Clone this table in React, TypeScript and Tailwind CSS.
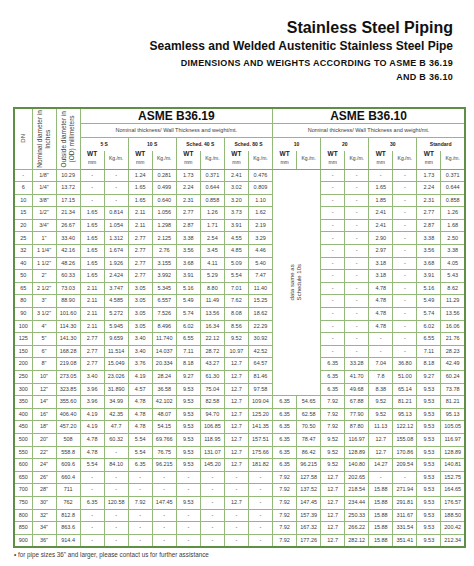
import React from "react";

const b19 = ["5 S", "10 S", "Sched. 40 S", "Sched. 80 S"];
const b10 = ["10", "20", "30", "Standard"];

// rows up to 300 leave out the "10" pair of ASME B36.10 (merged cell)
const rows: string[][] = [
  ["-", '1/8"', "10.29", "-", "-", "1.24", "0.281", "1.73", "0.371", "2.41", "0.476", "-", "-", "-", "-", "1.73", "0.371"],
  ["6", '1/4"', "13.72", "-", "-", "1.65", "0.499", "2.24", "0.644", "3.02", "0.809", "-", "-", "1.65", "-", "2.24", "0.644"],
  ["10", '3/8"', "17.15", "-", "-", "1.65", "0.640", "2.31", "0.858", "3.20", "1.10", "-", "-", "1.85", "-", "2.31", "0.858"],
  ["15", '1/2"', "21.34", "1.65", "0.814", "2.11", "1.056", "2.77", "1.26", "3.73", "1.62", "-", "-", "2.41", "-", "2.77", "1.26"],
  ["20", '3/4"', "26.67", "1.65", "1.054", "2.11", "1.298", "2.87", "1.71", "3.91", "2.19", "-", "-", "2.41", "-", "2.87", "1.68"],
  ["25", '1"', "33.40", "1.65", "1.312", "2.77", "2.125", "3.38", "2.54", "4.55", "3.29", "-", "-", "2.90", "-", "3.38", "2.50"],
  ["32", '1 1/4"', "42.16", "1.65", "1.674", "2.77", "2.76", "3.56", "3.45", "4.85", "4.46", "-", "-", "2.97", "-", "3.56", "3.38"],
  ["40", '1 1/2"', "48.26", "1.65", "1.926", "2.77", "3.155", "3.68", "4.11", "5.09", "5.40", "-", "-", "3.18", "-", "3.68", "4.05"],
  ["50", '2"', "60.33", "1.65", "2.424", "2.77", "3.992", "3.91", "5.29", "5.54", "7.47", "-", "-", "3.18", "-", "3.91", "5.43"],
  ["65", '2 1/2"', "73.03", "2.11", "3.747", "3.05", "5.345", "5.16", "8.80", "7.01", "11.40", "-", "-", "4.78", "-", "5.16", "8.62"],
  ["80", '3"', "88.90", "2.11", "4.585", "3.05", "6.557", "5.49", "11.49", "7.62", "15.25", "-", "-", "4.78", "-", "5.49", "11.29"],
  ["90", '3 1/2"', "101.60", "2.11", "5.272", "3.05", "7.526", "5.74", "13.56", "8.08", "18.62", "-", "-", "4.78", "-", "5.74", "13.56"],
  ["100", '4"', "114.30", "2.11", "5.945", "3.05", "8.496", "6.02", "16.34", "8.56", "22.29", "-", "-", "4.78", "-", "6.02", "16.06"],
  ["125", '5"', "141.30", "2.77", "9.659", "3.40", "11.740", "6.55", "22.12", "9.52", "30.92", "-", "-", "-", "-", "6.55", "21.76"],
  ["150", '6"', "168.28", "2.77", "11.514", "3.40", "14.037", "7.11", "28.72", "10.97", "42.52", "-", "-", "-", "-", "7.11", "28.23"],
  ["200", '8"', "219.08", "2.77", "15.049", "3.76", "20.334", "8.18", "43.27", "12.7", "64.57", "6.35", "33.28", "7.04", "36.80", "8.18", "42.49"],
  ["250", '10"', "273.05", "3.40", "23.026", "4.19", "28.24", "9.27", "61.30", "12.7", "81.46", "6.35", "41.70", "7.8", "51.00", "9.27", "60.24"],
  ["300", '12"', "323.85", "3.96", "31.890", "4.57", "36.58", "9.53", "75.04", "12.7", "97.58", "6.35", "49.68", "8.38", "65.14", "9.53", "73.78"],
  ["350", '14"', "355.60", "3.96", "34.99", "4.78", "42.102", "9.53", "82.58", "12.7", "109.04", "6.35", "54.65", "7.92", "67.88", "9.52", "81.21", "9.53", "81.21"],
  ["400", '16"', "406.40", "4.19", "42.35", "4.78", "48.07", "9.53", "94.70", "12.7", "125.20", "6.35", "62.58", "7.92", "77.90", "9.52", "95.13", "9.53", "95.13"],
  ["450", '18"', "457.20", "4.19", "47.7", "4.78", "54.15", "9.53", "106.85", "12.7", "141.35", "6.35", "70.50", "7.92", "87.80", "11.13", "122.12", "9.53", "105.05"],
  ["500", '20"', "508", "4.78", "60.32", "5.54", "69.766", "9.53", "118.95", "12.7", "157.51", "6.35", "78.47", "9.52", "116.97", "12.7", "155.08", "9.53", "116.97"],
  ["550", '22"', "558.8", "4.78", "-", "5.54", "76.75", "9.53", "131.07", "12.7", "175.66", "6.35", "86.42", "9.52", "128.89", "12.7", "170.86", "9.53", "128.89"],
  ["600", '24"', "609.6", "5.54", "84.10", "6.35", "96.215", "9.53", "145.20", "12.7", "181.82", "6.35", "96.215", "9.52", "140.80", "14.27", "209.54", "9.53", "140.81"],
  ["650", '26"', "660.4", "-", "-", "-", "-", "-", "-", "-", "-", "7.92", "127.58", "12.7", "202.65", "-", "-", "9.53", "152.75"],
  ["700", '28"', "711", "-", "-", "-", "-", "-", "-", "-", "-", "7.92", "137.52", "12.7", "218.54", "15.88", "271.94", "9.53", "164.65"],
  ["750", '30"', "762", "6.35", "120.58", "7.92", "147.45", "9.53", "-", "12.7", "-", "7.92", "147.45", "12.7", "234.44", "15.88", "291.81", "9.53", "176.57"],
  ["800", '32"', "812.8", "-", "-", "-", "-", "-", "-", "-", "-", "7.92", "157.39", "12.7", "250.33", "15.88", "311.67", "9.53", "188.50"],
  ["850", '34"', "863.6", "-", "-", "-", "-", "-", "-", "-", "-", "7.92", "167.32", "12.7", "266.22", "15.88", "331.54", "9.53", "200.42"],
  ["900", '36"', "914.4", "-", "-", "-", "-", "-", "-", "-", "-", "7.92", "177.26", "12.7", "282.12", "15.88", "351.41", "9.53", "212.34"],
];

const cell = "border border-[#94b97b] p-0 text-center align-middle";
const td = `${cell} h-[12.6px] text-[5.5px] leading-none text-[#3b3b3b]`;

function Vertical({ lines, size }: { lines: string[]; size: string }) {
  return (
    <div className="flex h-full items-center justify-center">
      <div className={`rotate-180 text-center font-normal leading-[1.2] text-[#3b3b3b] [writing-mode:vertical-rl] ${size}`}>
        {lines.map((l) => (
          <div key={l}>{l}</div>
        ))}
      </div>
    </div>
  );
}

export default function App() {
  const groups = [...b19, ...b10];

  return (
    <div className="min-h-[566px] w-[474px] bg-white font-['Liberation_Sans',Arial,sans-serif]">
      {/* Heading */}
      <div className="flex flex-col items-end pr-[21px] pt-[20px] font-bold text-[#111]">
        <div className="text-[16px] leading-[16px]">Stainless Steel Piping</div>
        <div className="mt-[3.5px] text-[12px] leading-[12px]">Seamless and Welded Austenitic Stainless Steel Pipe</div>
        <div className="mt-[7.5px] text-[9px] leading-[9px] tracking-[0.3px]">DIMENSIONS AND WEIGHTS ACCORDING TO ASME B 36.19</div>
        <div className="mt-[5px] text-[9px] leading-[9px] tracking-[0.3px]">AND B 36.10</div>
      </div>

      {/* Table */}
      <table className="ml-[13px] mt-[25px] w-[451px] table-fixed border-collapse border-2 border-[#5e8f45]">
        <colgroup>
          <col className="w-[18px]" />
          {Array.from({ length: 18 }).map((_, i) => (
            <col key={i} className="w-[24.06px]" />
          ))}
        </colgroup>
        <thead>
          <tr className="h-[15px]">
            <th rowSpan={4} className={cell}>
              <Vertical lines={["DN"]} size="text-[6px]" />
            </th>
            <th rowSpan={4} className={cell}>
              <Vertical lines={["Nominal diameter in", "Inches"]} size="text-[6.5px]" />
            </th>
            <th rowSpan={4} className={cell}>
              <Vertical lines={["Outside diameter in", "(OD) millimeters"]} size="text-[6.5px]" />
            </th>
            <th colSpan={8} className={`${cell} text-[12px] leading-none font-bold text-[#111]`}>ASME B36.19</th>
            <th colSpan={8} className={`${cell} text-[12px] leading-none font-bold text-[#111]`}>ASME B36.10</th>
          </tr>
          <tr className="h-[14px]">
            {[0, 1].map((i) => (
              <th key={i} colSpan={8} className={`${cell} text-[5.5px] font-normal text-[#3b3b3b]`}>
                Nominal thickness/ Wall Thickness and weight/mt.
              </th>
            ))}
          </tr>
          <tr className="h-[14px]">
            {groups.map((g) => (
              <th key={g} colSpan={2} className={`${cell} border-b-0 text-[5px] font-bold text-[#222]`}>
                {g}
              </th>
            ))}
          </tr>
          <tr className="h-[18px]">
            {groups.map((g) => (
              <React.Fragment key={g}>
                <th className={`${cell} border-t-0 border-b-[#7fa867] align-top`}>
                  <div className="text-[6.5px] leading-none font-bold text-[#222]">WT</div>
                  <div className="mt-[2.5px] text-[5px] leading-none font-normal text-[#3b3b3b]">mm</div>
                </th>
                <th className={`${cell} border-t-0 border-b-[#7fa867] align-bottom pb-[3px] text-[5px] leading-none font-normal text-[#3b3b3b]`}>
                  Kg./m.
                </th>
              </React.Fragment>
            ))}
          </tr>
        </thead>
        <tbody>
          {rows.map((r, i) => (
            <tr key={r[0] + i}>
              {r.slice(0, 11).map((v, j) => (
                <td key={j} className={td}>
                  {v}
                </td>
              ))}
              {i === 0 && (
                <td rowSpan={18} colSpan={2} className={cell}>
                  <Vertical lines={["data same as", "Schedule 10s"]} size="text-[6px]" />
                </td>
              )}
              {r.slice(11).map((v, j) => (
                <td key={j + 11} className={td}>
                  {v}
                </td>
              ))}
            </tr>
          ))}
        </tbody>
      </table>

      <div className="ml-[14px] mt-[4px] text-[6.3px] leading-none text-[#3b3b3b]">
        • for pipe sizes 36" and larger, please contact us for further assistance
      </div>
    </div>
  );
}
